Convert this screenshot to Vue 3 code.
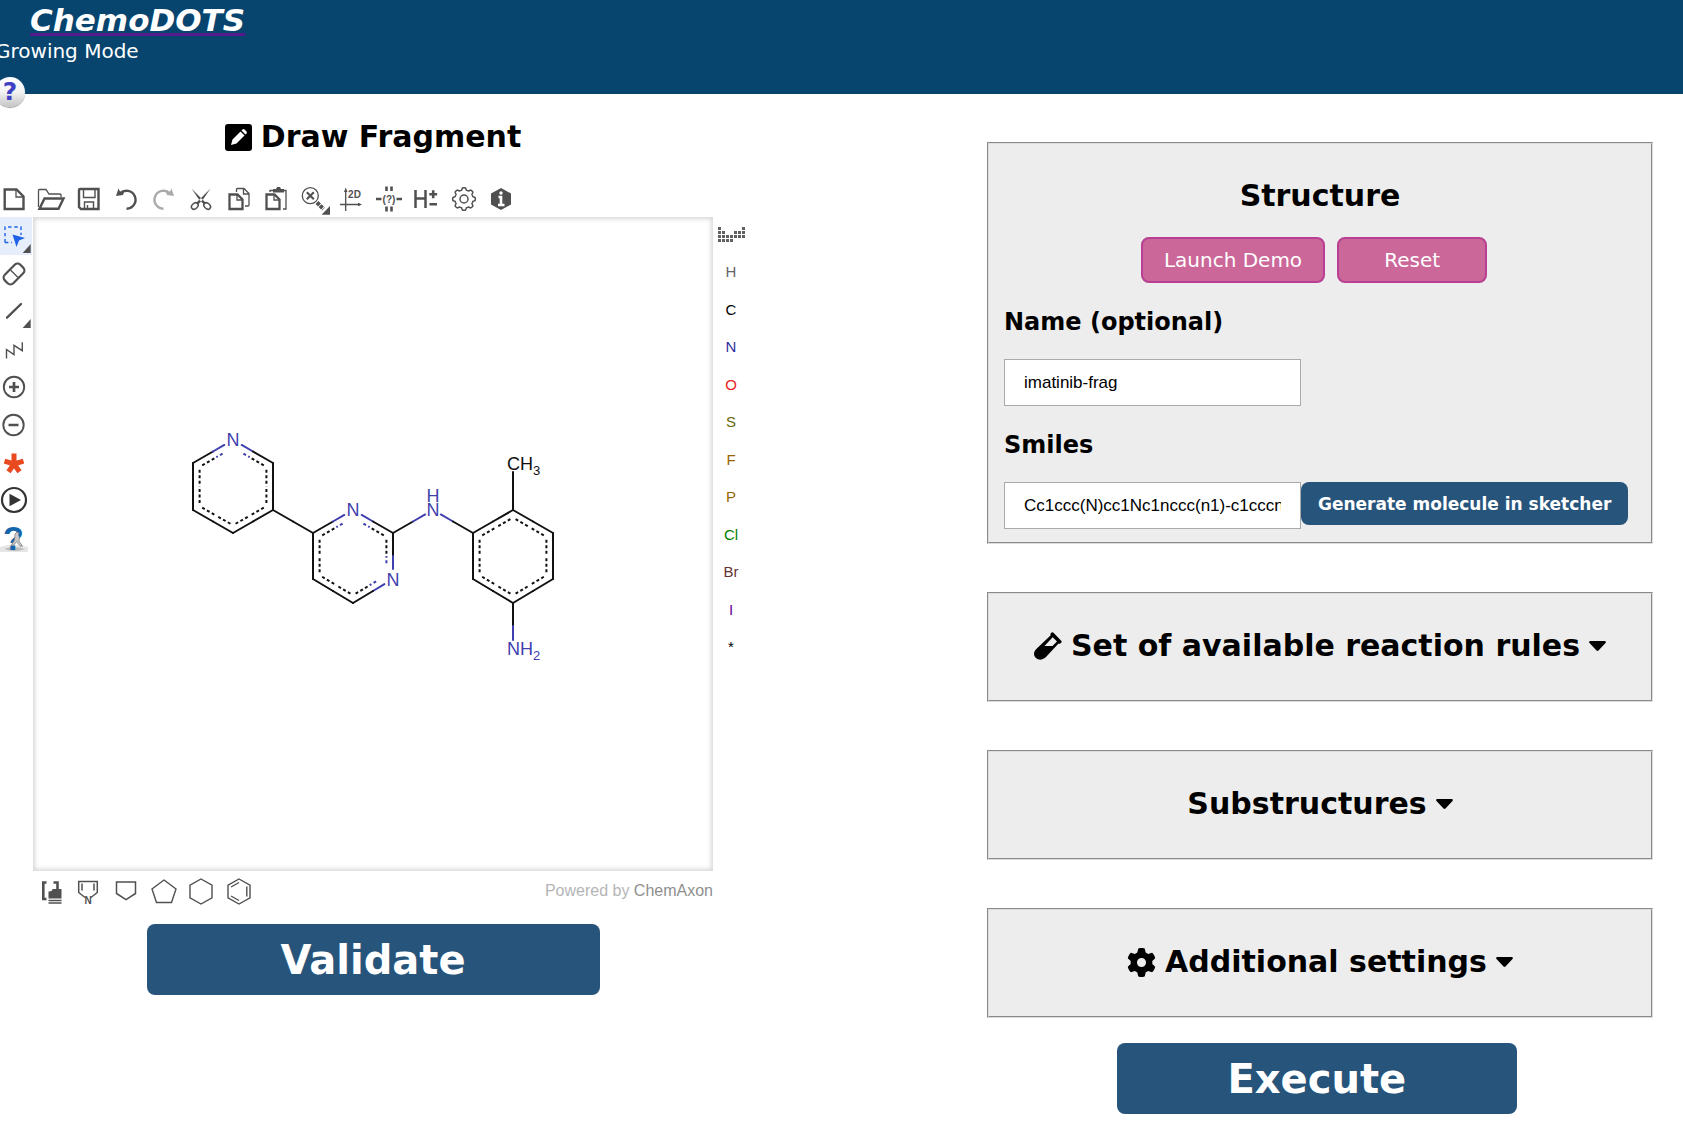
<script setup>
import { ref } from 'vue'

const name = ref('imatinib-frag')
const smiles = ref('Cc1ccc(N)cc1Nc1nccc(n1)-c1cccnc1')

const elements = [
  { symbol: 'H', color: '#666666' },
  { symbol: 'C', color: '#000000' },
  { symbol: 'N', color: '#2f2f9f' },
  { symbol: 'O', color: '#ee1c25' },
  { symbol: 'S', color: '#666600' },
  { symbol: 'F', color: '#996600' },
  { symbol: 'P', color: '#996600' },
  { symbol: 'Cl', color: '#008000' },
  { symbol: 'Br', color: '#663333' },
  { symbol: 'I', color: '#660099' },
  { symbol: '*', color: '#000000' }
]

// Columns filled in each row of the periodic table glyph
const tableDots = [[0, 6], [0, 1, 4, 5, 6], [0, 1, 2, 3, 4, 5, 6], [0, 1, 2, 3]]
  .flatMap((row, y) => row.map((x) => ({ x: x * 4, y: y * 4 })))

// Molecule: atoms as [x, y, labelled, blue]
const black = '#111111'
const blue = '#3f3fae'
const atoms = {
  a1: [200, 223, 1, 1], a2: [240, 246], a3: [240, 293], a4: [200, 316], a5: [160, 293], a6: [160, 246],
  b1: [320, 293, 1, 1], b2: [360, 316], b3: [360, 362, 1, 1], b4: [320, 386], b5: [280, 362], b6: [280, 316],
  n: [400, 293, 1, 1],
  c1: [480, 293], c2: [520, 316], c3: [520, 362], c4: [480, 386], c5: [440, 362], c6: [440, 316],
  me: [480, 246, 1, 0], am: [480, 432, 1, 1]
}
const rings = [
  { center: [200, 269], ids: ['a1', 'a2', 'a3', 'a4', 'a5', 'a6'] },
  { center: [320, 339], ids: ['b1', 'b2', 'b3', 'b4', 'b5', 'b6'] },
  { center: [480, 339], ids: ['c1', 'c2', 'c3', 'c4', 'c5', 'c6'] }
]
const links = [['a3', 'b6'], ['b2', 'n'], ['n', 'c6'], ['c1', 'me'], ['c4', 'am']]

const segments = []
function addBond(p, q, from, to, trimLabel, trimPlain, dashed) {
  const len = Math.hypot(q[0] - p[0], q[1] - p[1])
  const at = (d) => [p[0] + ((q[0] - p[0]) * d) / len, p[1] + ((q[1] - p[1]) * d) / len]
  const start = at(from[2] ? trimLabel : trimPlain)
  const end = at(len - (to[2] ? trimLabel : trimPlain))
  const mid = at(len / 2)
  segments.push({ a: start, b: mid, color: from[3] ? blue : black, dashed })
  segments.push({ a: end, b: mid, color: to[3] ? blue : black, dashed })
}
for (const ring of rings) {
  const inset = (p) => p.slice(0, 2).map((v, i) => ring.center[i] + (v - ring.center[i]) * 0.835)
  ring.ids.forEach((id, i) => {
    const from = atoms[id]
    const to = atoms[ring.ids[(i + 1) % 6]]
    addBond(from, to, from, to, 10, 0, false)
    addBond(inset(from), inset(to), from, to, 12, 3, true)
  })
}
for (const [f, t] of links) addBond(atoms[f], atoms[t], atoms[f], atoms[t], 9, 0, false)

// Scalloped outline of the settings cog
const cog = Array.from({ length: 97 }, (_, i) => {
  const t = (i / 96) * Math.PI * 2
  const r = 10.2 + 1.1 * Math.tanh(3 * Math.cos(8 * t))
  return `${i ? 'L' : 'M'}${(15 + r * Math.sin(t)).toFixed(2)} ${(15 - r * Math.cos(t)).toFixed(2)}`
}).join('') + 'Z'

const topTools = [
  { id: 'new', label: 'New', svg: '<path stroke-width="2.4" d="M5.700 5.500h11.800l7 7v12.500h-18.800z"/><path stroke-width="1.3" d="M17 6v7h7"/>' },
  { id: 'open', label: 'Open', svg: '<path stroke-width="1.3" d="M2.500 23V6.500q0-1 1-1h6.500l3 4.500h11q1 0 1 1v2"/><path stroke-width="2.4" d="M8.500 14.500h19l-5 10.300H3.500z"/>' },
  { id: 'save', label: 'Save', svg: '<path stroke-width="2.4" d="M5 6q0-1 1-1h18.500v20H7l-2-2z"/><path stroke-width="1.4" d="M9.500 5v8.500h11.500V5M10.500 25v-7h9v7M13.500 21v4"/>' },
  { id: 'undo', label: 'Undo', svg: '<path stroke-width="2.4" d="M9 9.500A9 9 0 1 1 15.500 24.700"/><path fill="currentColor" stroke="none" d="M5 12 7.500 4.500l1.500 3 4 .5-1 3z"/>' },
  { id: 'redo', label: 'Redo', svg: '<path stroke-width="2.4" d="M21 9.500A9 9 0 1 0 14.500 24.700"/><path fill="currentColor" stroke="none" d="M25 12 22.500 4.500l-1.500 3-4 .5 1 3z"/>' },
  { id: 'cut', label: 'Cut', svg: '<path fill="currentColor" stroke="none" d="M5.500 4.500 20 19l-2 1.500L13 15.500zM24.500 4.500 10 19l2 1.500L17 15.500z"/><ellipse cx="8.800" cy="22" rx="3.700" ry="2.700" stroke-width="1.5" transform="rotate(-42 8.800 22)"/><ellipse cx="21.200" cy="22" rx="3.700" ry="2.700" stroke-width="1.5" transform="rotate(42 21.200 22)"/>' },
  { id: 'copy', label: 'Copy', svg: '<path stroke-width="2.3" d="M5.500 10.500h8l5 5v9.500h-13z"/><path stroke-width="1.3" d="M13 10.500v5.500h5.500M12.500 8V5.500q0-1 1-1h6.500l5 5V21q0 1-1 1h-3M19.500 5v5h5"/>' },
  { id: 'paste', label: 'Paste', svg: '<path stroke-width="2.3" d="M5.500 10.500h8l5 5v9.500h-13z"/><path stroke-width="1.3" d="M13 10.500v5.500h5.500M9 8V6.500h3M22.500 6.500h2.500V25h-3"/><path fill="currentColor" stroke="none" d="M12 5h3l1-2h3l1 2h3v3.500H12z"/>' },
  { id: 'clean', label: 'Zoom', svg: '<circle cx="11.300" cy="11.700" r="8" stroke-width="1.3"/><path stroke-width="2.1" d="m7.800 8.200 7 7M14.800 8.200l-7 7"/><path stroke-width="4" stroke-dasharray="3.500 .8" d="m18 18.500 6.500 6.500"/><path fill="currentColor" stroke="none" d="M22.500 30.700H31V22z"/>' },
  { id: '2d', label: 'Clean in 2D', svg: '<path stroke-width="1.3" d="M9.700 27V6M4 20.500h20"/><path fill="currentColor" stroke="none" d="M9.700 3.500 11.500 8H8zM26 20.500 22 18.700v3.600z"/><text x="18.500" y="13.500">2D</text>' },
  { id: 'check', label: 'Check structure', svg: '<path stroke-width="2.6" d="M2 15h5.500M22.500 15H28M12.500 2.500V7M17.500 2.500V7M12.500 22.500v5M17.500 22.500v5"/><text x="15" y="18.500">(?)</text>' },
  { id: 'hydrogen', label: 'Toggle hydrogens', svg: '<path stroke-width="2.5" d="M4.500 6v18M14.500 6v18M4.500 14.500h10"/><path stroke-width="2.6" d="M18.300 10.200h7.800M22.200 6.200v8M18.500 20.200H26"/>' },
  { id: 'settings', label: 'Settings', svg: `<path stroke-width="1.5" d="${cog}"/><circle cx="15" cy="15" r="4" stroke-width="1.5"/>` },
  { id: 'about', label: 'About', svg: '<path fill="currentColor" stroke="none" d="m15 4 10 5.500v11L15 26 5 20.500v-11z"/><path stroke="#fff" stroke-width="2.6" d="M12.500 13H15v8M12 21h6.500"/><circle cx="15" cy="9" r="1.700" fill="#fff" stroke="none"/>' }
]

const corner = '<path fill="currentColor" stroke="none" d="M23.700 32h8v-9z"/>'
const sideTools = [
  { id: 'select', label: 'Select', svg: '<path stroke="#1f62e6" stroke-width="1.4" stroke-dasharray="3.400 2.800" d="M6 21.500v-15.500h16v8M6 21.500h7"/><path fill="#1f62e6" stroke="none" d="m13.500 13.500 12.500 3.500-6 2.500-2.500 6.500z"/>' + corner },
  { id: 'erase', label: 'Erase', svg: '<rect x="4" y="9" width="22" height="12" rx="4" stroke-width="2.2" transform="rotate(-45 15 15)"/><path stroke-width="1.3" d="m11.500 11 7.500 7.500"/>' },
  { id: 'bond', label: 'Single bond', svg: '<path stroke-width="2.4" stroke-linecap="round" d="M8 21.700 22 8"/>' + corner },
  { id: 'chain', label: 'Chain', svg: '<path stroke-width="1.4" d="M7.500 24.500v-9l7.500 5.200v-9.400l8.300 5.400V8.300"/>' },
  { id: 'plus', label: 'Increase charge', svg: '<circle cx="15" cy="15" r="10.200" stroke-width="1.9"/><path stroke-width="2.7" d="M10 15h10M15 10v10"/>' },
  { id: 'minus', label: 'Decrease charge', svg: '<circle cx="14.500" cy="15" r="10.200" stroke-width="1.9"/><path stroke-width="2.5" d="M9.500 15h10"/>' },
  { id: 'star', label: 'Mark atom', svg: '<path stroke="#e8491f" stroke-width="5" d="M15 16V5.500M15 16l-9.500-2.800M15 16l9.500-2.800M15 16l-5.500 7.800M15 16l5.500 7.800"/>' },
  { id: 'run', label: 'Run', svg: '<circle cx="15" cy="15" r="12" stroke="#333" stroke-width="2.2"/><path fill="#333" stroke="none" d="M10.500 8.800 22 15l-11.500 6.200z"/>' },
  { id: 'help', label: 'Help', svg: '<path fill="#e6e6e6" stroke="none" d="M1 24q14-5 28 0v5H1z"/><path fill="#bdbdbd" stroke="none" d="M5 26q10-4 21 0-10 4-21 0z"/><text class="big" x="14.500" y="27">?</text><path fill="#c9c9c9" stroke="#777" stroke-width=".7" d="m16 11 2-2 2 1-.5 2.500 1 1.500-.5 4 3.500 5-2 .5-4-5-3 4-2-.5 3-5z"/>' }
]

const templates = [
  { id: 'group', label: 'Group', svg: '<path stroke-width="2.6" d="M10.500 6.500H7.300v16.500h3.200M17.500 6.500h4v7"/><path fill="currentColor" stroke="none" d="M12.500 15.500q4 0 4-2.500h9v9.500h-13z"/><path stroke-width="1.5" d="M12.500 24.500h13M12.500 27h13"/>' },
  { id: 'pyrrole', label: 'Pyrrole', svg: '<path stroke-width="1.5" d="M12 21.500 5.700 16.500V5.500h18.600v11L18 21.500M9 7.500v7M21 7.500v7"/><text x="15" y="28">N</text>' },
  { id: 'cyclopentane-down', label: 'Cyclopentane', svg: '<path stroke-width="1.5" d="M5.500 6h19v11.500L15 23.700l-9.500-6.200z"/>' },
  { id: 'cyclopentane', label: 'Cyclopentane, upright', svg: '<path stroke-width="1.4" d="m15 4 12 9-4.500 13.500h-15L3 13z"/>' },
  { id: 'cyclohexane', label: 'Cyclohexane', svg: '<path stroke-width="1.4" d="m15 3 11 6.200v12.600L15 28 4 21.800V9.200z"/>' },
  { id: 'benzene', label: 'Benzene', svg: '<path stroke-width="1.4" d="m15 3 11 6.200v12.600L15 28 4 21.800V9.200zM7 11l8-4.500M22.800 10.500v10M7 20l8 4.500"/>' }
]
</script>

<template>
  <header class="banner">
    <a class="brand" href="#">ChemoDOTS</a>
    <p class="mode">Growing Mode</p>
    <a class="help" href="#help" aria-label="Help">?</a>
  </header>

  <main class="page">
    <section class="draw">
      <h2 class="heading title">
        <svg class="pencil" width="27" height="27" viewBox="0 0 27 27">
          <rect width="27" height="27" rx="3" />
          <path fill="#fff" d="m6 21 1.500-5.500 8-8 4 4-8 8zM16.500 6.500l1-1q1-.8 2 0l2 2q.8 1 0 2l-1 1z" />
        </svg>
        Draw Fragment
      </h2>

      <div class="toolbar">
        <button v-for="tool in topTools" :key="tool.id" type="button" class="tool" :class="{ muted: tool.id === 'redo' }" :aria-label="tool.label">
          <svg class="glyph" viewBox="0 0 30 30" v-html="tool.svg" />
        </button>
      </div>

      <div class="workspace">
        <div class="side">
          <button v-for="tool in sideTools" :key="tool.id" type="button" class="tool" :class="{ active: tool.id === 'select' }" :aria-label="tool.label">
            <svg class="glyph" viewBox="0 0 30 30" v-html="tool.svg" />
          </button>
        </div>

        <div class="canvas">
          <svg class="molecule" viewBox="0 0 680 654" role="img" aria-label="Molecule">
            <line
              v-for="(s, i) in segments" :key="i"
              :x1="s.a[0]" :y1="s.a[1]" :x2="s.b[0]" :y2="s.b[1]"
              :stroke="s.color" :stroke-dasharray="s.dashed ? '3 2.5' : null"
              stroke-width="2" :stroke-linecap="s.dashed ? 'butt' : 'round'"
            />
            <g class="nitrogen">
              <text x="200" y="229" text-anchor="middle">N</text>
              <text x="320" y="299" text-anchor="middle">N</text>
              <text x="360" y="369" text-anchor="middle">N</text>
              <text x="400" y="299" text-anchor="middle">N<tspan x="400" y="285">H</tspan></text>
              <text x="474" y="438">NH<tspan class="sub" dy="5">2</tspan></text>
            </g>
            <text x="474" y="253">CH<tspan class="sub" dy="5">3</tspan></text>
          </svg>
        </div>

        <div class="elements">
          <button type="button" class="tool" aria-label="Periodic table">
            <svg width="27" height="15" viewBox="0 0 27 15">
              <rect v-for="(d, i) in tableDots" :key="i" :x="d.x" :y="d.y" width="3" height="3" fill="#606060" />
            </svg>
          </button>
          <button v-for="el in elements" :key="el.symbol" type="button" class="tool" :style="{ color: el.color }">{{ el.symbol }}</button>
        </div>
      </div>

      <div class="footer">
        <div class="templates">
          <button v-for="tool in templates" :key="tool.id" type="button" class="tool" :aria-label="tool.label">
            <svg class="glyph" viewBox="0 0 30 30" v-html="tool.svg" />
          </button>
        </div>
        <span class="powered">Powered by <a href="#chemaxon">ChemAxon</a></span>
      </div>

      <button type="button" class="primary validate">Validate</button>
    </section>

    <form class="settings" @submit.prevent>
      <section class="panel structure">
        <h2 class="heading">Structure</h2>
        <div class="actions">
          <button type="button" class="pink">Launch Demo</button>
          <button type="button" class="pink">Reset</button>
        </div>
        <label for="name">Name (optional)</label>
        <input id="name" v-model="name" type="text">
        <label for="smiles">Smiles</label>
        <div class="row">
          <input id="smiles" v-model="smiles" type="text">
          <button type="button" class="primary generate">Generate molecule in sketcher</button>
        </div>
      </section>

      <section class="panel">
        <h2><button type="button" class="heading toggle">
          <svg width="28" height="28" viewBox="0 0 28 28">
            <path fill-rule="evenodd" d="M17.500.5q1-.8 2 .2l7.700 8q.9 1 0 2l-1 .9q-.8.5-1.700 0L11.500 25.500q-3.500 3-7.500 1.800-5-2.500-3.700-7.300.5-1.500 2-3L16.700 3.200q-.5-1 0-1.800zM18.700 5.300 10.500 14h8l4.500-4.500z" />
          </svg>
          Set of available reaction rules
          <svg class="caret" width="17" height="10" viewBox="0 0 17 10"><path d="M1 0h15q1.500.5.500 2L9.500 9.500q-1 .8-2 0L.5 2Q-.5.5 1 0z" /></svg>
        </button></h2>
      </section>

      <section class="panel">
        <h2><button type="button" class="heading toggle">
          Substructures
          <svg class="caret" width="17" height="10" viewBox="0 0 17 10"><path d="M1 0h15q1.500.5.500 2L9.500 9.500q-1 .8-2 0L.5 2Q-.5.5 1 0z" /></svg>
        </button></h2>
      </section>

      <section class="panel">
        <h2><button type="button" class="heading toggle">
          <svg width="29" height="29" viewBox="0 0 512 512">
            <path d="M495.9 166.600c3.200 8.700 .5 18.400-6.400 24.600l-43.300 39.400c1.100 8.300 1.700 16.800 1.700 25.400s-.6 17.100-1.700 25.400l43.300 39.400c6.900 6.200 9.600 15.900 6.400 24.600c-4.400 11.900-9.700 23.300-15.800 34.300l-4.700 8.100c-6.600 11-14 21.400-22.100 31.200c-5.900 7.200-15.700 9.600-24.500 6.800l-55.700-17.700c-13.400 10.300-28.200 18.900-44 25.400l-12.500 57.100c-2 9.100-9 16.300-18.200 17.800c-13.800 2.300-28 3.500-42.500 3.500s-28.700-1.200-42.500-3.500c-9.200-1.500-16.200-8.700-18.200-17.800l-12.500-57.100c-15.800-6.500-30.600-15.100-44-25.400L83.100 425.900c-8.800 2.800-18.600 .3-24.500-6.800c-8.100-9.800-15.500-20.200-22.100-31.200l-4.700-8.100c-6.100-11-11.400-22.400-15.800-34.300c-3.200-8.700-.5-18.400 6.400-24.600l43.300-39.400C64.600 273.100 64 264.600 64 256s.6-17.100 1.700-25.400L22.400 191.200c-6.900-6.200-9.600-15.900-6.400-24.600c4.400-11.900 9.700-23.300 15.800-34.300l4.700-8.100c6.600-11 14-21.400 22.100-31.200c5.900-7.200 15.700-9.600 24.500-6.800l55.700 17.700c13.400-10.300 28.200-18.900 44-25.400l12.500-57.100c2-9.100 9-16.300 18.200-17.800C227.300 1.200 241.500 0 256 0s28.700 1.200 42.500 3.500c9.200 1.500 16.200 8.700 18.200 17.800l12.500 57.100c15.800 6.500 30.600 15.100 44 25.400l55.700-17.700c8.800-2.800 18.600-.3 24.500 6.800c8.100 9.800 15.500 20.200 22.100 31.200l4.700 8.100c6.100 11 11.400 22.400 15.800 34.300zM256 336a80 80 0 1 0 0-160 80 80 0 1 0 0 160z" />
          </svg>
          Additional settings
          <svg class="caret" width="17" height="10" viewBox="0 0 17 10"><path d="M1 0h15q1.500.5.500 2L9.500 9.500q-1 .8-2 0L.5 2Q-.5.5 1 0z" /></svg>
        </button></h2>
      </section>

      <button type="submit" class="primary execute">Execute</button>
    </form>
  </main>
</template>

<style>
body {
  background: #fff;
  color: #000;
  font-family: Verdana, "DejaVu Sans", sans-serif;
  overflow-x: hidden;
}
</style>

<style scoped>
h2, p { margin: 0; }
button { font-family: inherit; cursor: pointer; }

.banner {
  position: relative;
  box-sizing: border-box;
  height: 94px;
  background: #07456f;
  color: #fff;
}
.brand {
  display: block;
  width: max-content;
  margin-left: 30px;
  color: #fff;
  font-size: 31px;
  font-weight: bold;
  font-style: italic;
  line-height: 40px;
  text-decoration: underline 3px #551a8b;
  text-decoration-skip-ink: none;
  text-underline-offset: 2px;
}
.mode {
  margin-left: -5px;
  font-size: 20px;
  line-height: 22px;
}
.help {
  position: absolute;
  left: -5px;
  bottom: -13px;
  width: 30px;
  height: 30px;
  border-radius: 50%;
  background: linear-gradient(#fff, #f2f2f2 50%, #c4c4c4);
  box-shadow: 0 1px 1px #999;
  color: #3f3fc4;
  font-size: 25px;
  font-weight: bold;
  line-height: 30px;
  text-align: center;
  text-decoration: none;
}

.page {
  display: grid;
  grid-template-columns: 746px minmax(0, 1fr);
  column-gap: 241px;
  align-items: start;
  padding-right: 30px;
}
.heading {
  display: flex;
  align-items: center;
  justify-content: center;
  gap: 9px;
  font-size: 30px;
  font-weight: bold;
  line-height: 36px;
}
.title { padding: 25px 0; }
.pencil { flex: none; }

.tool {
  display: flex;
  align-items: center;
  justify-content: center;
  min-width: 0;
  padding: 0;
  border: 0;
  background: none;
  color: #505050;
  font: 15px "Liberation Sans", Arial, sans-serif;
}
.muted { color: #aaa; }
.glyph {
  flex: none;
  width: 30px;
  height: 30px;
  overflow: visible;
  fill: none;
  stroke: currentColor;
}
.glyph :deep(text) {
  fill: currentColor;
  stroke: none;
  font: bold 10px "Liberation Sans", Arial, sans-serif;
  text-anchor: middle;
}
.glyph :deep(.big) {
  fill: #1565ad;
  font-size: 34px;
}
.toolbar {
  display: grid;
  grid-template-columns: repeat(14, 1fr);
  width: 525px;
  height: 37px;
  margin-left: -5px;
}
.workspace {
  display: grid;
  grid-template-columns: 33px 1fr 33px;
  align-items: start;
}
.side {
  display: grid;
  grid-template-rows: repeat(9, 1fr);
  width: 32px;
  height: 340px;
}
.side .tool { padding-right: 4px; }
.side .active { background: #e6eefb; }
.canvas {
  box-shadow: inset 0 0 4px 2px #d8d8d8;
}
.molecule {
  display: block;
  width: 100%;
  font: 18px "Liberation Sans", Arial, sans-serif;
  fill: #111;
}
.nitrogen { fill: #3f3fae; }
.sub { font-size: 13px; }
.elements {
  display: grid;
  grid-template-rows: repeat(12, 1fr);
  height: 450px;
  padding-left: 3px;
}
.elements .tool {
  justify-self: center;
  padding-bottom: 3px;
}

.footer {
  display: flex;
  align-items: center;
  justify-content: space-between;
  height: 39px;
  padding: 0 33px 0 32px;
}
.templates {
  display: grid;
  grid-template-columns: repeat(6, 1fr);
  width: 226px;
}
.powered {
  color: #b5b5b5;
  font: 16px "Liberation Sans", Arial, sans-serif;
}
.powered a {
  color: #8f8f8f;
  text-decoration: none;
}

.primary {
  border: 0;
  border-radius: 8px;
  background: #27547b;
  color: #fff;
  font-weight: bold;
}
.validate, .execute {
  display: block;
  height: 71px;
  font-size: 40px;
}
.validate {
  width: 453px;
  margin: 14px auto 0;
}
.execute {
  width: 60%;
  margin: -23px 0 0 130px;
}

.settings {
  display: flex;
  flex-direction: column;
  gap: 48px;
  padding-top: 48px;
}
.panel {
  box-sizing: border-box;
  min-height: 110px;
  padding: 34px 15px;
  border: 2px groove #ddd;
  background: #ededed;
}
.structure { padding-bottom: 13px; }
.toggle {
  width: 100%;
  padding: 0;
  border: 0;
  background: none;
  color: inherit;
  white-space: nowrap;
}
.actions {
  display: flex;
  justify-content: center;
  margin-top: 23px;
}
.pink {
  min-width: 150px;
  height: 46px;
  margin-right: 12px;
  padding: 0 21px;
  border: 2px solid #b83f93;
  border-radius: 8px;
  background: #cb6799;
  color: #fff;
  font-size: 20px;
}
label {
  display: block;
  margin: 25px 0 23px;
  font-size: 24px;
  font-weight: bold;
  line-height: 28px;
}
.row {
  display: flex;
  align-items: flex-start;
}
input {
  box-sizing: border-box;
  display: block;
  width: 297px;
  height: 47px;
  padding: 0 19px;
  border: 1px solid #aaa;
  background: #fff;
  color: #000;
  font: 17px "Liberation Sans", Arial, sans-serif;
}
.generate {
  height: 43px;
  padding: 0 17px;
  font-size: 17px;
  white-space: nowrap;
}
</style>
